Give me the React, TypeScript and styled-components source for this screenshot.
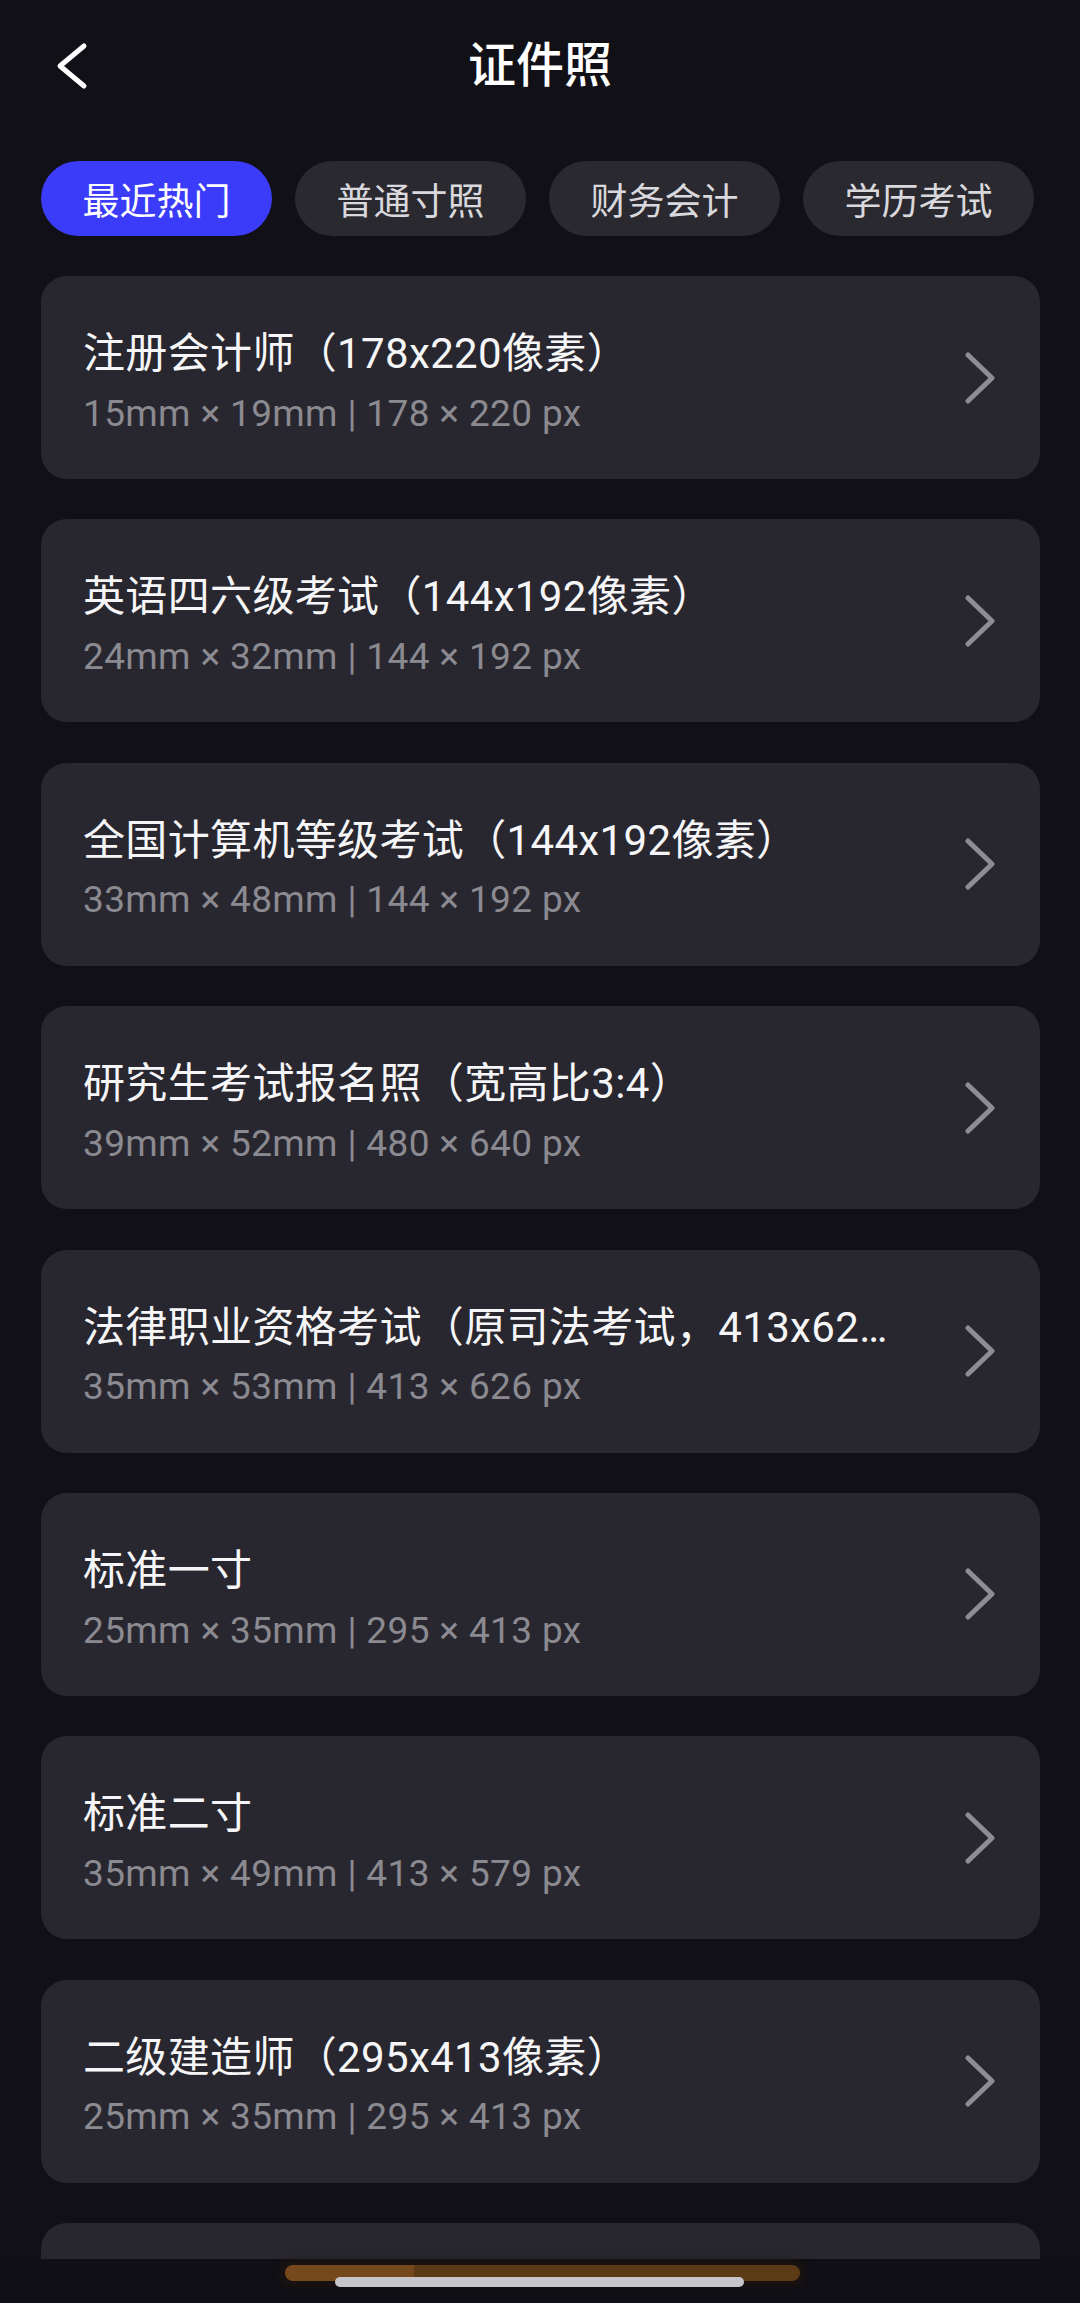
import styled, { createGlobalStyle } from "styled-components";

type Spec = {
  name: string;
  size: string;
};

const TABS = ["最近热门", "普通寸照", "财务会计", "学历考试"];

const SPECS: Spec[] = [
  { name: "注册会计师（178x220像素）", size: "15mm × 19mm | 178 × 220 px" },
  { name: "英语四六级考试（144x192像素）", size: "24mm × 32mm | 144 × 192 px" },
  { name: "全国计算机等级考试（144x192像素）", size: "33mm × 48mm | 144 × 192 px" },
  { name: "研究生考试报名照（宽高比3:4）", size: "39mm × 52mm | 480 × 640 px" },
  { name: "法律职业资格考试（原司法考试，413x626像素）", size: "35mm × 53mm | 413 × 626 px" },
  { name: "标准一寸", size: "25mm × 35mm | 295 × 413 px" },
  { name: "标准二寸", size: "35mm × 49mm | 413 × 579 px" },
  { name: "二级建造师（295x413像素）", size: "25mm × 35mm | 295 × 413 px" },
  { name: "一级建造师（295x413像素）", size: "25mm × 35mm | 295 × 413 px" },
];

const BackIcon = () => (
  <svg width="32" height="48" viewBox="0 0 32 48" fill="none">
    <path d="M28 4 L4 24 L28 44" stroke="#ffffff" strokeWidth="5" strokeLinecap="round" strokeLinejoin="round" />
  </svg>
);

const ChevronIcon = () => (
  <svg width="36" height="52" viewBox="0 0 36 52" fill="none">
    <path d="M5 3 L29 26 L5 49" stroke="#8e8d94" strokeWidth="5" strokeLinecap="round" strokeLinejoin="round" />
  </svg>
);

const App = () => {
  const active = 0;

  return (
    <>
      <GlobalStyle />
      <Screen>
        <Header>
          <BackButton aria-label="返回">
            <BackIcon />
          </BackButton>
          <Title>证件照</Title>
          <span />
        </Header>

        <TabRow>
          {TABS.map((t, i) => (
            <Tab key={t} $active={i === active}>
              {t}
            </Tab>
          ))}
        </TabRow>

        <List>
          {SPECS.map((s) => (
            <Card key={s.name}>
              <CardText>
                <CardTitle>{s.name}</CardTitle>
                <CardSub>{s.size}</CardSub>
              </CardText>
              <ChevronIcon />
            </Card>
          ))}
        </List>
      </Screen>

      <NavBar>
        <NavTrack>
          <NavGlow />
          <NavPill />
        </NavTrack>
      </NavBar>
    </>
  );
};

export default App;

const GlobalStyle = createGlobalStyle`
  html, body {
    margin: 0;
    padding: 0;
    background: #111017;
  }
  body {
    font-family: Roboto, "Noto Sans CJK SC", "Noto Sans", sans-serif;
    color: #f4f4f6;
    overflow: hidden;
  }
  * {
    box-sizing: border-box;
  }
`;

const Screen = styled.div`
  min-height: 2303px;
  background: #111017;
`;

const Header = styled.header`
  height: 132px;
  padding: 0 41px;
  display: grid;
  grid-template-columns: 1fr auto 1fr;
  align-items: center;
`;

const BackButton = styled.button`
  justify-self: start;
  display: flex;
  align-items: center;
  padding: 0 0 0 15px;
  margin: 0;
  border: 0;
  background: none;
`;

const Title = styled.h1`
  margin: 0;
  font-size: 48px;
  font-weight: 500;
  line-height: 1;
  color: #ffffff;
`;

const TabRow = styled.nav`
  display: flex;
  gap: 23px;
  padding: 29px 41px 0;
`;

const Tab = styled.div<{ $active: boolean }>`
  width: 231px;
  height: 75px;
  flex-shrink: 0;
  border-radius: 38px;
  display: flex;
  align-items: center;
  justify-content: center;
  font-size: 37px;
  background: ${(p) => (p.$active ? "#3b3cfa" : "#2a2930")};
  color: ${(p) => (p.$active ? "#ffffff" : "#d9d8dd")};
`;

const List = styled.div`
  display: flex;
  flex-direction: column;
  gap: 40.4px;
  padding: 40px 40px 0 41px;
`;

const Card = styled.div`
  height: 203px;
  border-radius: 26px;
  background: #28272f;
  display: flex;
  align-items: center;
  padding: 0 41px 0 42px;
  gap: 74px;
`;

const CardText = styled.div`
  flex: 1;
  min-width: 0;
  display: flex;
  flex-direction: column;
  gap: 9px;
  padding-top: 9px;
`;

const CardTitle = styled.div`
  font-size: 42px;
  line-height: 1.3;
  letter-spacing: 0.35px;
  color: #f6f6f8;
  white-space: nowrap;
  overflow: hidden;
  text-overflow: ellipsis;
`;

const CardSub = styled.div`
  font-size: 37px;
  line-height: 1.25;
  letter-spacing: 0.35px;
  color: #8b8a91;
  white-space: nowrap;
`;

const NavBar = styled.div`
  position: fixed;
  left: 0;
  right: 0;
  bottom: 0;
  height: 44px;
  background: #100f15;
  display: flex;
  justify-content: center;
`;

const NavTrack = styled.div`
  position: relative;
  width: 515px;
  height: 44px;
  margin-left: 4px;
`;

const NavGlow = styled.div`
  position: absolute;
  left: 0;
  right: 0;
  top: 6px;
  height: 16px;
  border-radius: 8px;
  background: linear-gradient(90deg, #76491c 0 25%, #5c3a16 25% 100%);
  box-shadow: 0 0 10px 4px rgba(40, 24, 10, 0.6);
`;

const NavPill = styled.div`
  position: absolute;
  left: 50px;
  width: 409px;
  top: 18px;
  height: 10px;
  border-radius: 5px;
  background: #c6c5ca;
`;
